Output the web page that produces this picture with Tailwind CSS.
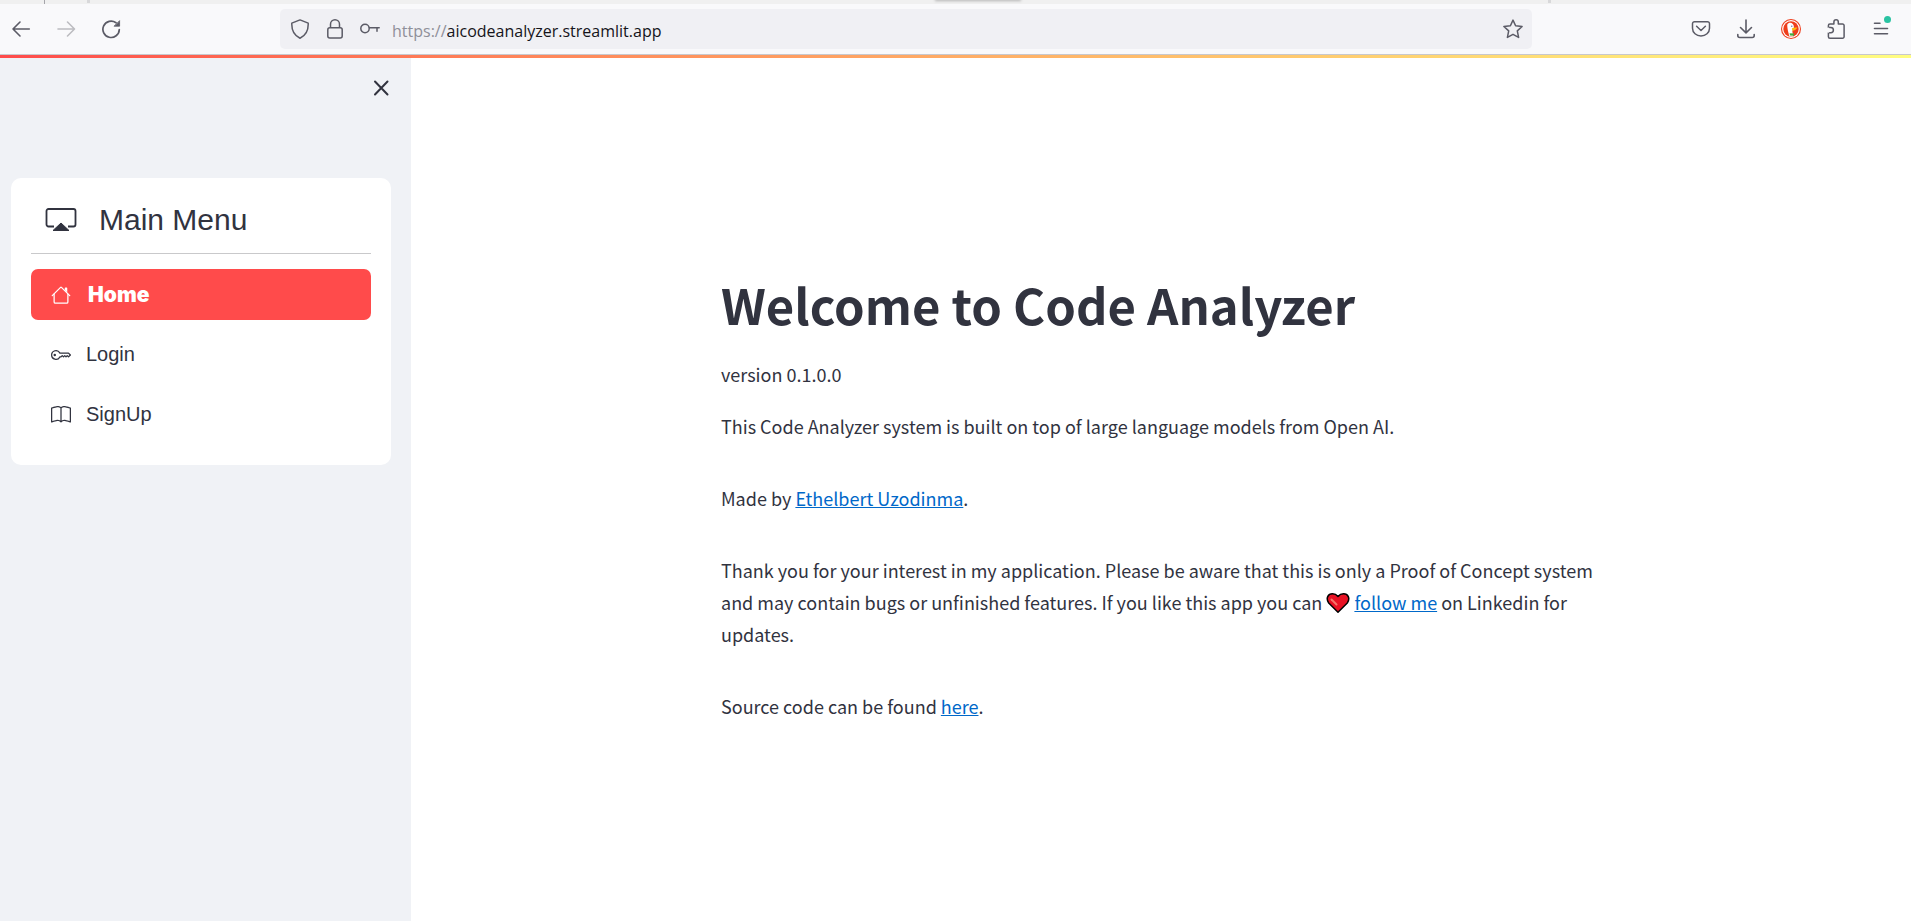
<!DOCTYPE html>
<html lang="en">
<head>
<meta charset="utf-8">
<title>Code Analyzer</title>
<script src="https://cdn.jsdelivr.net/npm/@tailwindcss/browser@4"></script>
</head>
<body class="min-h-screen flex flex-col bg-white text-[#31333f]">

<!-- Bottom edge of the tab strip -->
<div class="relative h-1 bg-[#f0f0f0] overflow-hidden">
  <div class="absolute left-11 top-0 w-px h-1 bg-[#a5a5aa]"></div>
  <div class="absolute left-[87px] top-0 w-[3px] h-[3px] bg-[#d8d8da]"></div>
  <div class="absolute left-[49%] -top-px w-[84px] h-px bg-[#b8b8b8] shadow-[0_0_3px_1px_#b4b4b4]"></div>
  <div class="absolute left-[81%] top-0 w-[3px] h-[3px] bg-[#d8d8da]"></div>
</div>

<!-- Browser toolbar -->
<header class="flex items-center h-[51px] bg-[#f9f9fb] border-b border-[#c8c8cd] text-[#5b5b66]">
  <nav class="flex items-center gap-[25px] pl-[11px] w-[280px] shrink-0" aria-label="History">
    <button aria-label="Back"><svg class="block size-5" viewBox="0 0 20 20" fill="none" stroke="currentColor" stroke-width="1.6" stroke-linecap="round" stroke-linejoin="round"><path d="M18.300 10H2M9 3L2 10l7 7"/></svg></button>
    <button aria-label="Forward" class="text-[#bcbcc1]"><svg class="block size-5" viewBox="0 0 20 20" fill="none" stroke="currentColor" stroke-width="1.600" stroke-linecap="round" stroke-linejoin="round"><path d="M2 10h16.300M11.500 3l7 7-7 7"/></svg></button>
    <button aria-label="Reload"><svg class="block size-5" viewBox="0 0 20 20" fill="none" stroke="currentColor" stroke-width="1.700" stroke-linecap="round"><path d="M18.300 10.500A8.200 8.200 0 1 1 15 3.700"/><path d="M18.600 2v5.200h-5.200z" fill="currentColor" stroke-width=".8" stroke-linejoin="round"/></svg></button>
  </nav>
  <div class="flex items-center h-10 flex-1 rounded-[5px] bg-[#f0f0f4] pl-[10px] pr-[9px]">
    <button aria-label="Tracking protection"><svg class="block size-5" viewBox="0 0 20 20" fill="none" stroke="currentColor" stroke-width="1.500" stroke-linejoin="round"><path d="M10 .9l8.200 3.200c.3 6.400-1.700 12.200-8.200 15.100C3.500 16.300 1.500 10.500 1.800 4.100z"/></svg></button>
    <button aria-label="Site security" class="ml-[15px]"><svg class="block size-5" viewBox="0 0 20 20" fill="none" stroke="currentColor" stroke-width="1.500"><rect x="2.800" y="8.800" width="14.400" height="10.200" rx="2"/><path d="M5.500 8.500V5.300a4.500 4.500 0 0 1 9 0v3.200"/></svg></button>
    <button aria-label="Saved login" class="ml-[15px]"><svg class="block size-5" viewBox="0 0 20 20" fill="none" stroke="currentColor" stroke-width="1.500" stroke-linecap="round"><circle cx="5" cy="9.500" r="4.200"/><path d="M9.400 8.700h9.800M17 9v3.200"/></svg></button>
    <label for="url" class="ml-3 pt-[3px] font-['Open_Sans'] text-base leading-6 text-[#8f8f99]">https://</label>
    <input id="url" type="text" value="aicodeanalyzer.streamlit.app" class="flex-1 min-w-0 pt-[3px] bg-transparent outline-none font-['Open_Sans'] text-base leading-6 text-[#15141a]">
    <button aria-label="Bookmark this page"><svg class="block size-5" viewBox="0 0 20 20" fill="none" stroke="currentColor" stroke-width="1.500" stroke-linejoin="round"><path d="M10 1.100l2.600 5.700 6.500.7-4.800 4.400 1.300 6.500L10 15.300l-5.600 3.100 1.300-6.500L.9 7.500l6.500-.7z"/></svg></button>
  </div>
  <div class="flex items-center justify-end gap-[25px] w-[379px] shrink-0 pr-5">
    <button aria-label="Pocket"><svg class="block size-5" viewBox="0 0 20 20" fill="none" stroke="currentColor" stroke-width="1.500" stroke-linecap="round" stroke-linejoin="round"><path d="M3.500 2.700h13a2 2 0 0 1 2 2v4.500a8.500 7.800 0 0 1-17 0V4.700a2 2 0 0 1 2-2z"/><path d="M5.600 7.300l4.400 4.200 4.400-4.200"/></svg></button>
    <button aria-label="Downloads"><svg class="block size-5" viewBox="0 0 20 20" fill="none" stroke="currentColor" stroke-width="1.600" stroke-linecap="round" stroke-linejoin="round"><path d="M10 1v12.500M4.500 8.500l5.500 5.300 5.500-5.300M1.800 15.500v1a2 2 0 0 0 2 2h12.400a2 2 0 0 0 2-2v-1"/></svg></button>
    <button aria-label="DuckDuckGo"><svg class="block size-5" viewBox="0 0 20 20"><circle cx="10" cy="10" r="10" fill="#ee3e1c"/><circle cx="10" cy="10" r="8.900" fill="#fff"/><circle cx="10" cy="10" r="7.700" fill="#ee3e1c"/><path d="M6.300 5.500c1-2 4-2.200 5.500-.6 1.200 1.300 1.200 3 1 5l-1.500 2.200.8 5.200c-1.500.4-2.700.3-3.700 0C7.700 14.500 6 9 6.300 5.500z" fill="#fff"/><circle cx="10.800" cy="7.200" r=".6" fill="#2d4f8e"/><path d="M11 9.200c1.500-.7 3-.9 5.300-.7-.7 2-2.500 3.100-5.100 3.300z" fill="#fdb913"/><path d="M8.500 14.300l4.700.3-.4 2.200-3.700-.3z" fill="#3fae3f"/></svg></button>
    <button aria-label="Extensions"><svg class="block size-5" viewBox="0 0 20 20" fill="none" stroke="currentColor" stroke-width="1.500" stroke-linecap="round" stroke-linejoin="round"><path d="M2.400 8.500V6.500a1.500 1.500 0 0 1 1.500-1.500h4V3a2.200 2.200 0 0 1 4.400 0v2h4.300a1.500 1.500 0 0 1 1.500 1.500v11.200a1.500 1.500 0 0 1-1.500 1.500H3.900a1.500 1.500 0 0 1-1.500-1.500v-4h2.400a2.300 2.300 0 0 0 0-5.200z"/><path d="M2.400 9.500v3.200" stroke="#f9f9fb" stroke-width="2"/></svg></button>
    <button aria-label="Application menu" class="relative"><svg class="block size-5" viewBox="0 0 20 20" fill="none" stroke="currentColor" stroke-width="1.600" stroke-linecap="round"><path d="M3.500 4.200h5.500M3.500 9.500h13M3.500 14.800h13"/></svg><span class="absolute -top-[3px] right-0 size-[7px] rounded-full bg-[#2ac3a2]"></span></button>
  </div>
</header>

<div class="h-[3px] bg-linear-to-r from-[#ff4b4b] to-[#fffd80]"></div>

<div class="flex flex-1">
  <aside class="w-[411px] shrink-0 bg-[#f0f2f6] pl-[11px] pr-5">
    <div class="flex justify-end h-[120px] pt-5">
      <button aria-label="Close sidebar" class="self-start"><svg class="block size-5" viewBox="0 0 20 20" fill="none" stroke="currentColor" stroke-width="2" stroke-linecap="round"><path d="M4 3.500l12.500 13M16.500 3.500l-12.500 13"/></svg></button>
    </div>
    <nav class="rounded-[10px] bg-white px-5 pt-5 pb-4 font-['Liberation_Sans']">
      <h2 class="flex items-center h-14 pb-3 pl-[14px] gap-[22px] text-3xl border-b border-[#c9c9cb]">
        <svg class="size-8" viewBox="0 0 32 32" fill="none" stroke="currentColor" stroke-width="1.800" stroke-linejoin="round"><path d="M9 22.500H3.500a2 2 0 0 1-2-2V7a2 2 0 0 1 2-2h25a2 2 0 0 1 2 2v13.500a2 2 0 0 1-2 2H23"/><path d="M16 19l8 7.500H8z" fill="currentColor" stroke-width="1"/></svg>
        Main Menu
      </h2>
      <ul class="mt-[15px] text-xl leading-[31px]">
        <li class="mb-[9px]"><a href="#home" aria-current="page" class="flex items-center gap-[17px] px-5 py-[10px] rounded-[7px] bg-[#ff4b4b] text-white font-['Inter'] text-[21px] leading-[31px] font-black">
          <svg class="size-5" viewBox="0 0 16 16" fill="currentColor"><path fill-rule="evenodd" d="M2 13.500V7h1v6.500a.5.5 0 0 0 .5.5h9a.5.5 0 0 0 .5-.5V7h1v6.500a1.500 1.500 0 0 1-1.500 1.500h-9A1.500 1.500 0 0 1 2 13.500zm11-11V6l-2-2V2.500a.5.5 0 0 1 .5-.5h1a.5.5 0 0 1 .5.500z"/><path fill-rule="evenodd" d="M7.293 1.500a1 1 0 0 1 1.414 0l6.647 6.646a.5.5 0 0 1-.708.708L8 2.207 1.354 8.854a.5.5 0 1 1-.708-.708L7.293 1.500z"/></svg>Home</a></li>
        <li class="mb-[9px]"><a href="#login" class="flex items-center gap-[15px] px-5 py-[10px]">
          <svg class="size-5" viewBox="0 0 16 16" fill="currentColor"><path d="M0 8a4 4 0 0 1 7.465-2H14a.5.5 0 0 1 .354.146l1.500 1.500a.5.5 0 0 1 0 .708l-1.500 1.500a.5.5 0 0 1-.708 0L13 9.207l-.646.647a.5.5 0 0 1-.708 0L11 9.207l-.646.647a.5.5 0 0 1-.708 0L9 9.207l-.646.647A.5.5 0 0 1 8 10h-.535A4 4 0 0 1 0 8zm4-3a3 3 0 1 0 2.712 4.285A.5.5 0 0 1 7.163 9h.63l.853-.854a.5.5 0 0 1 .708 0l.646.647.646-.647a.5.5 0 0 1 .708 0l.646.647.646-.647a.5.5 0 0 1 .708 0l.646.647.793-.793-1-1h-6.630a.5.5 0 0 1-.451-.285A3 3 0 0 0 4 5z"/><path d="M4 8a1 1 0 1 1-2 0 1 1 0 0 1 2 0z"/></svg>Login</a></li>
        <li class="mb-[9px]"><a href="#signup" class="flex items-center gap-[15px] px-5 py-[10px]">
          <svg class="size-5" viewBox="0 0 16 16" fill="currentColor"><path d="M1 2.828c.885-.370 2.154-.769 3.388-.893 1.330-.134 2.458.063 3.112.752v9.746c-.935-.530-2.120-.603-3.213-.493-1.180.120-2.370.461-3.287.811V2.828zm7.500-.141c.654-.689 1.782-.886 3.112-.752 1.234.124 2.503.523 3.388.893v9.923c-.918-.350-2.107-.692-3.287-.810-1.094-.111-2.278-.039-3.213.492V2.687zM8 1.783C7.015.936 5.587.810 4.287.940c-1.514.153-3.042.672-3.994 1.105A.5.5 0 0 0 0 2.500v11a.5.5 0 0 0 .707.455c.882-.400 2.303-.881 3.680-1.020 1.409-.142 2.590.087 3.223.877a.5.5 0 0 0 .780 0c.633-.790 1.814-1.019 3.222-.877 1.378.139 2.800.620 3.681 1.020A.5.5 0 0 0 16 13.500v-11a.5.5 0 0 0-.293-.455c-.952-.433-2.480-.952-3.994-1.105C10.413.809 8.985.936 8 1.783z"/></svg>SignUp</a></li>
      </ul>
    </nav>
  </aside>

  <main class="flex-1 px-5 pt-[213px] font-['Noto_Sans_CJK_SC',sans-serif] text-lg leading-8">
    <div class="max-w-[880px] mx-auto">
      <h1 class="text-[49px] leading-[66px] font-bold">Welcome to Code Analyzer</h1>
      <p class="mt-[21px]">version 0.1.0.0</p>
      <p class="mt-5">This Code Analyzer system is built on top of large language models from Open AI.</p>
      <p class="mt-10">Made by <a href="#author" class="text-[#0068c9] underline">Ethelbert Uzodinma</a>.</p>
      <p class="mt-10">Thank you for your interest in my application. Please be aware that this is only a Proof of Concept system and may contain bugs or unfinished features. If you like this app you can <svg class="inline size-6 align-[-5px]" role="img" aria-label="love" viewBox="0 0 24 24"><path d="M12 21.300L2.700 12C-.5 7.300 2 2.700 6.500 2.700c2.300 0 4 .9 5.500 2.700 1.500-1.800 3.200-2.700 5.500-2.700 4.500 0 7 4.600 3.800 9.300z" fill="#e81224" stroke="#000" stroke-width="1.500" stroke-linejoin="round"/><path d="M5.500 8.500l5 5" stroke="#f4776b" stroke-width="2" stroke-linecap="round"/></svg> <a href="#follow" class="text-[#0068c9] underline">follow me</a> on Linkedin for updates.</p>
      <p class="mt-10">Source code can be found <a href="#source" class="text-[#0068c9] underline">here</a>.</p>
    </div>
  </main>
</div>
</body>
</html>
